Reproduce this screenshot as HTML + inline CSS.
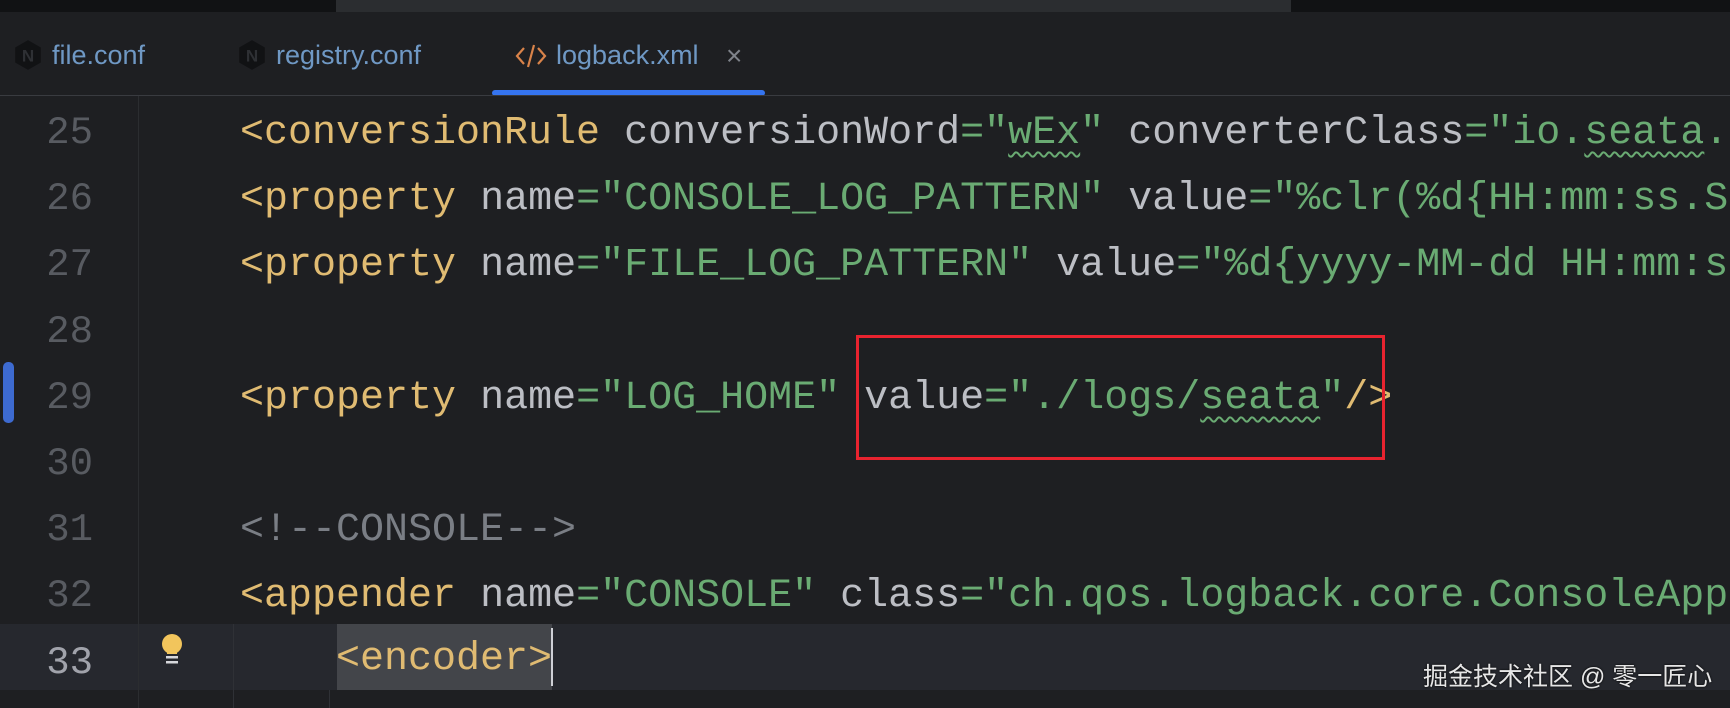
<!DOCTYPE html>
<html><head><meta charset="utf-8">
<style>
html,body{margin:0;padding:0;}
body{width:1730px;height:708px;overflow:hidden;background:#1e1f22;position:relative;font-family:"Liberation Mono",monospace;}
.abs{position:absolute;}
.tab{position:absolute;top:14px;height:83px;line-height:83px;font-family:"Liberation Sans",sans-serif;font-size:27px;color:#6f98c4;white-space:nowrap;}
.ln{position:absolute;left:0;width:93px;text-align:right;font-size:39px;color:#585b61;height:66px;line-height:66px;}
.code{position:absolute;left:240px;font-size:40px;white-space:pre;height:66px;line-height:66px;color:#bcbec4;}
.t{color:#e0bb72}.a{color:#bcbec4}.v{color:#6aab73}.c{color:#7a7e85}
.sq{text-decoration:underline wavy #6aab73;text-decoration-thickness:2px;text-underline-offset:8px;}
</style></head><body>
<div class="abs" style="left:0;top:0;width:1730px;height:12px;background:#111214"></div>
<div class="abs" style="left:336px;top:0;width:955px;height:12px;background:#2b2d30"></div>
<div class="abs" style="left:0;top:12px;width:1730px;height:83px;background:#1e1f22"></div>
<svg class="abs" style="left:12px;top:39px" width="32" height="32" viewBox="0 0 30 30"><polygon points="15,1 27,8 27,22 15,29 3,22 3,8" fill="#111214"/><text x="15" y="21" text-anchor="middle" font-family="Liberation Sans" font-weight="bold" font-size="16" fill="#2e3034">N</text></svg>
<div class="tab" style="left:52px">file.conf</div>
<svg class="abs" style="left:236px;top:39px" width="32" height="32" viewBox="0 0 30 30"><polygon points="15,1 27,8 27,22 15,29 3,22 3,8" fill="#111214"/><text x="15" y="21" text-anchor="middle" font-family="Liberation Sans" font-weight="bold" font-size="16" fill="#2e3034">N</text></svg>
<div class="tab" style="left:276px">registry.conf</div>
<svg class="abs" style="left:515px;top:41px" width="32" height="30" viewBox="0 0 32 28"><path d="M9 6 L2 14 L9 22" stroke="#d9834a" stroke-width="2.2" fill="none"/><path d="M23 6 L30 14 L23 22" stroke="#d9834a" stroke-width="2.2" fill="none"/><path d="M19 3 L13 25" stroke="#d9834a" stroke-width="2.2"/></svg>
<div class="tab" style="left:556px">logback.xml</div>
<div class="tab" style="left:726px;color:#7f838a;font-size:28px">×</div>
<div class="abs" style="left:492px;top:90px;width:273px;height:6px;background:#3574f0;border-radius:3px"></div>
<div class="abs" style="left:0;top:95px;width:1730px;height:1px;background:#393b40"></div>
<div class="abs" style="left:0;top:624px;width:1730px;height:66px;background:#26282e"></div>
<div class="abs" style="left:138px;top:96px;width:1px;height:612px;background:#2b2d30"></div>
<div class="abs" style="left:233px;top:624px;width:1px;height:84px;background:#2f3136"></div>
<div class="abs" style="left:329px;top:690px;width:1px;height:18px;background:#2f3136"></div>
<div class="abs" style="left:3px;top:362px;width:11px;height:61px;background:#3d6ad0;border-radius:5px"></div>
<div class="ln" style="top:100px">25</div>
<div class="ln" style="top:166px">26</div>
<div class="ln" style="top:232px">27</div>
<div class="ln" style="top:299px">28</div>
<div class="ln" style="top:365px">29</div>
<div class="ln" style="top:431px">30</div>
<div class="ln" style="top:497px">31</div>
<div class="ln" style="top:563px">32</div>
<div class="ln" style="top:630px;color:#a1a3ab">33</div>
<div class="code" style="top:101px"><span class="t">&lt;conversionRule</span> <span class="a">conversionWord</span><span class="v">="<span class="sq">wEx</span>"</span> <span class="a">converterClass</span><span class="v">="io.<span class="sq">seata</span>.</span></div>
<div class="code" style="top:167px"><span class="t">&lt;property</span> <span class="a">name</span><span class="v">="CONSOLE_LOG_PATTERN"</span> <span class="a">value</span><span class="v">="%clr(%d{HH:mm:ss.S</span></div>
<div class="code" style="top:233px"><span class="t">&lt;property</span> <span class="a">name</span><span class="v">="FILE_LOG_PATTERN"</span> <span class="a">value</span><span class="v">="%d{yyyy-MM-dd HH:mm:s</span></div>
<div class="code" style="top:366px"><span class="t">&lt;property</span> <span class="a">name</span><span class="v">="LOG_HOME"</span> <span class="a">value</span><span class="v">="./logs/<span class="sq">seata</span>"</span><span class="t">/&gt;</span></div>
<div class="code" style="top:498px"><span class="c">&lt;!--CONSOLE--&gt;</span></div>
<div class="code" style="top:564px"><span class="t">&lt;appender</span> <span class="a">name</span><span class="v">="CONSOLE"</span> <span class="a">class</span><span class="v">="ch.qos.logback.core.ConsoleApp</span></div>
<div class="abs" style="left:337px;top:624px;width:215px;height:66px;background:#43454a"></div>
<div class="code" style="top:627px;left:336px"><span class="t">&lt;encoder&gt;</span></div>
<div class="abs" style="left:551px;top:628px;width:2px;height:58px;background:#ced0d6"></div>
<div class="abs" style="left:856px;top:335px;width:523px;height:119px;border:3.5px solid #e8232f"></div>
<svg class="abs" style="left:160px;top:632px" width="24" height="34" viewBox="0 0 24 34"><circle cx="12" cy="12" r="10" fill="#f2c55c"/><rect x="7" y="16" width="10" height="6" fill="#f2c55c"/><rect x="6" y="24" width="12" height="2.5" fill="#d6d7db"/><rect x="6" y="29" width="12" height="2.5" fill="#d6d7db"/></svg>
<div class="abs" style="left:1423px;top:657px;font-family:'Liberation Sans','Noto Sans CJK SC',sans-serif;font-size:25px;color:#e6e6e6;white-space:nowrap;text-shadow:0 0 2px #000">掘金技术社区 @ 零一匠心</div>
</body></html>
